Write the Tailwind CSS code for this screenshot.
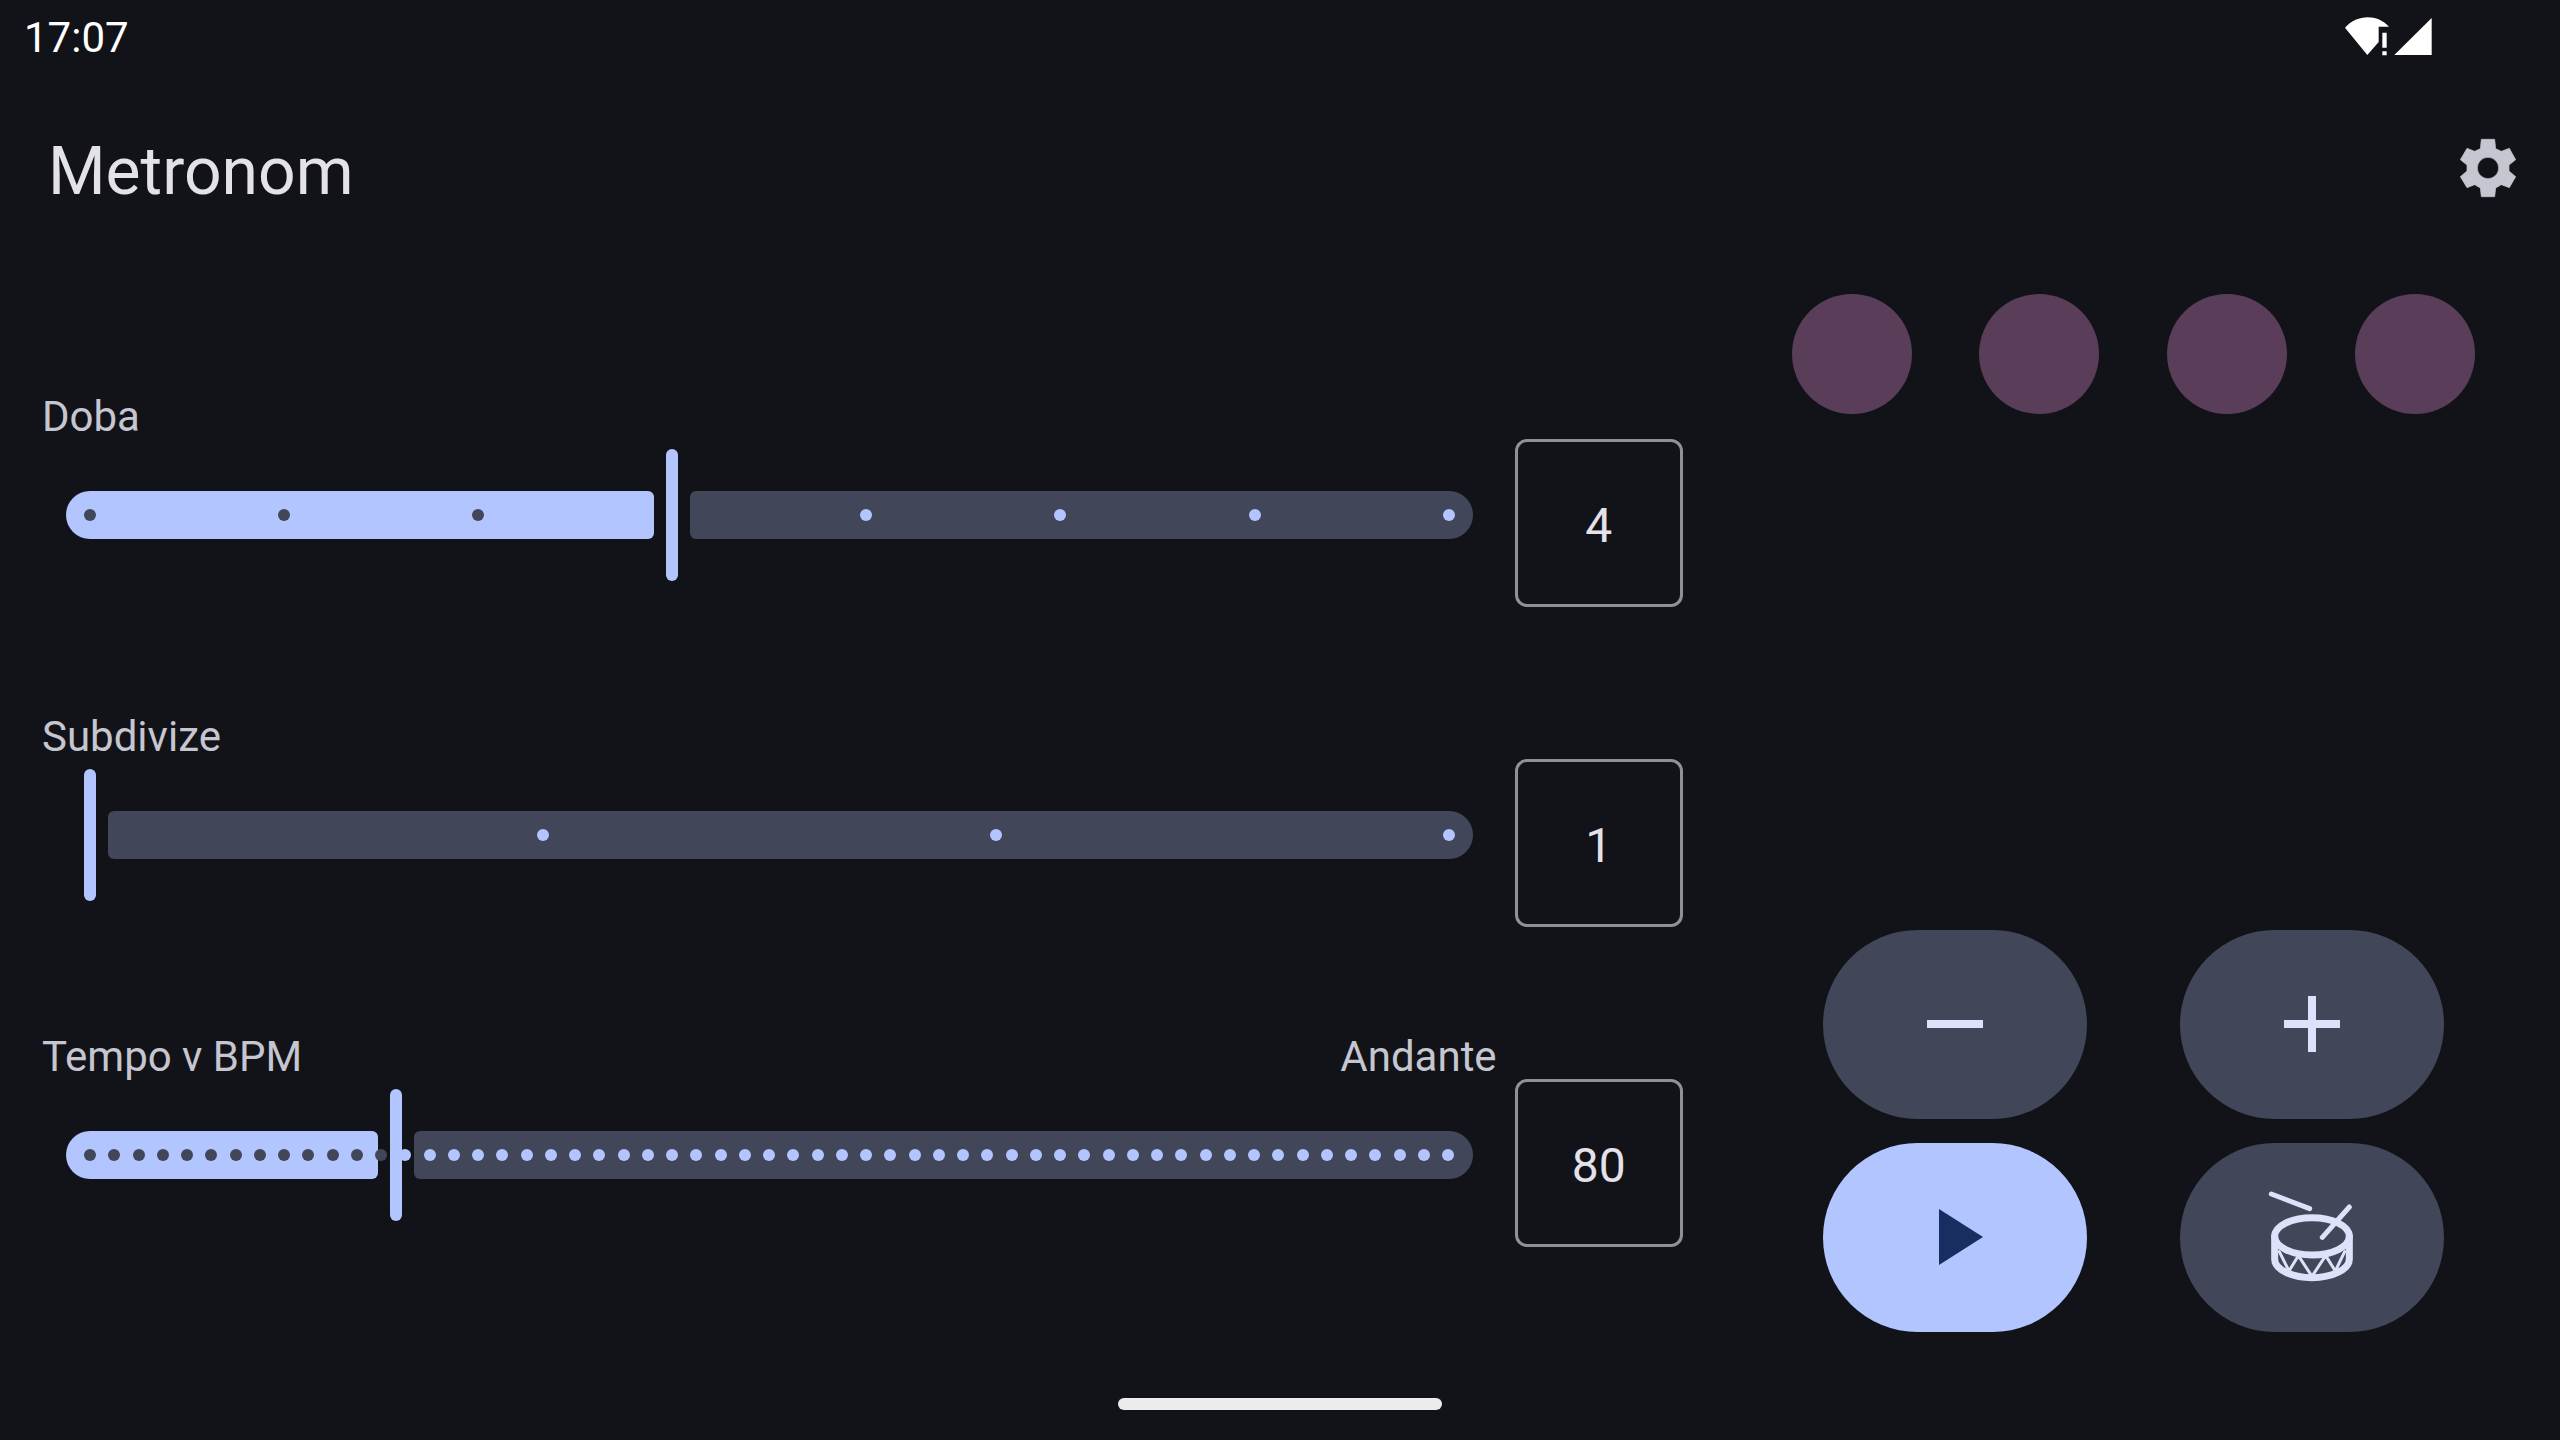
<!DOCTYPE html>
<html lang="cs">

<head>
  <meta charset="UTF-8">
  <meta name="viewport" content="width=device-width, initial-scale=1.0">
  <title>Metronom</title>
  <script src="https://cdn.jsdelivr.net/npm/@tailwindcss/browser@4"></script>
</head>

<body class="flex min-h-screen flex-col bg-[#121318] font-[Roboto,sans-serif] text-[#e3e2e9] antialiased">
  <!-- Status bar -->
  <div class="flex h-18 items-center justify-between pr-32 pl-6 text-white">
    <time class="pt-1 text-[42px] leading-12">17:07</time>
    <svg class="h-[39px] w-[88px]" viewBox="132 48 264 117" fill="currentColor" aria-hidden="true">
      <path d="M135 80C172 39 232 39 267 77H236V123L202 162Z" />
      <path d="M247 95h13v45h-13zM247 151h13v12h-13z" />
      <path d="M395 51V162H283Z" />
    </svg>
  </div>

  <!-- App bar -->
  <header class="flex h-48 items-center justify-between pr-9 pl-12">
    <h1 class="pt-2 text-[66px] leading-21">Metronom</h1>
    <button type="button" class="text-[#c5c6d0]" aria-label="Nastavení">
      <svg class="size-18" viewBox="456 396 216 216" fill="currentColor">
        <path fill-rule="evenodd" stroke="currentColor" stroke-width="2" stroke-linejoin="round"
          d="M544 418h40l3 28 17 8 24-9 19 34-20 16v18l20 17-19 33-24-9-17 10-3 26h-40l-3-26-17-10-23 9-20-33 20-17v-18l-20-16 20-34 23 9 17-8ZM564 472a32 32 0 1 0 0 64 32 32 0 0 0 0-64Z" />
      </svg>
    </button>
  </header>

  <main class="flex flex-1">
    <!-- Sliders -->
    <section class="flex w-2/3 flex-col justify-center gap-25 pt-0.5 pr-6 pl-[42px]">
      <div class="flex items-end gap-[18px]">
        <div class="flex-1 pb-[26px]">
          <div class="text-[42px] leading-15 text-[#c5c6d0]">
            <label for="beats">Doba</label>
          </div>
          <div data-slider class="relative mx-6 mt-0.5 h-33">
            <div class="flex h-full items-center gap-9">
              <div data-active class="h-12 shrink-0 rounded-l-[24px] rounded-r-md bg-[#b2c5ff]"></div>
              <div class="h-12 flex-1 rounded-l-md rounded-r-[24px] bg-[#414659]"></div>
            </div>
            <div data-ticks class="absolute inset-x-[18px] inset-y-0 flex items-center justify-between"></div>
            <input id="beats" type="range" min="1" max="8" value="4" data-tick-count="8"
              class="absolute inset-x-[18px] inset-y-0 appearance-none bg-transparent [&::-webkit-slider-thumb]:h-33 [&::-webkit-slider-thumb]:w-3 [&::-webkit-slider-thumb]:appearance-none [&::-webkit-slider-thumb]:rounded-full [&::-webkit-slider-thumb]:bg-[#b2c5ff]">
          </div>
        </div>
        <input type="text" inputmode="numeric" value="4" aria-label="Doba, hodnota" data-value-for="beats"
          class="size-42 rounded-xl border-3 border-[#8f9099] bg-transparent pt-1 text-center text-5xl">
      </div>

      <div class="flex items-end gap-[18px]">
        <div class="flex-1 pb-[26px]">
          <div class="text-[42px] leading-15 text-[#c5c6d0]">
            <label for="subdivisions">Subdivize</label>
          </div>
          <div data-slider class="relative mx-6 mt-0.5 h-33">
            <div class="flex h-full items-center gap-9">
              <div data-active class="h-12 shrink-0 rounded-l-[24px] rounded-r-md bg-[#b2c5ff]"></div>
              <div class="h-12 flex-1 rounded-l-md rounded-r-[24px] bg-[#414659]"></div>
            </div>
            <div data-ticks class="absolute inset-x-[18px] inset-y-0 flex items-center justify-between"></div>
            <input id="subdivisions" type="range" min="1" max="4" value="1" data-tick-count="4"
              class="absolute inset-x-[18px] inset-y-0 appearance-none bg-transparent [&::-webkit-slider-thumb]:h-33 [&::-webkit-slider-thumb]:w-3 [&::-webkit-slider-thumb]:appearance-none [&::-webkit-slider-thumb]:rounded-full [&::-webkit-slider-thumb]:bg-[#b2c5ff]">
          </div>
        </div>
        <input type="text" inputmode="numeric" value="1" aria-label="Subdivize, hodnota" data-value-for="subdivisions"
          class="size-42 rounded-xl border-3 border-[#8f9099] bg-transparent pt-1 text-center text-5xl">
      </div>

      <div class="flex items-end gap-[18px]">
        <div class="flex-1 pb-[26px]">
          <div class="flex justify-between text-[42px] leading-15 text-[#c5c6d0]">
            <label for="tempo">Tempo v BPM</label>
            <span>Andante</span>
          </div>
          <div data-slider class="relative mx-6 mt-0.5 h-33">
            <div class="flex h-full items-center gap-9">
              <div data-active class="h-12 shrink-0 rounded-l-[24px] rounded-r-md bg-[#b2c5ff]"></div>
              <div class="h-12 flex-1 rounded-l-md rounded-r-[24px] bg-[#414659]"></div>
            </div>
            <div data-ticks class="absolute inset-x-[18px] inset-y-0 flex items-center justify-between"></div>
            <input id="tempo" type="range" min="30" max="252" value="80" data-tick-count="57"
              class="absolute inset-x-[18px] inset-y-0 appearance-none bg-transparent [&::-webkit-slider-thumb]:h-33 [&::-webkit-slider-thumb]:w-3 [&::-webkit-slider-thumb]:appearance-none [&::-webkit-slider-thumb]:rounded-full [&::-webkit-slider-thumb]:bg-[#b2c5ff]">
          </div>
        </div>
        <input type="text" inputmode="numeric" value="80" aria-label="Tempo, hodnota" data-value-for="tempo"
          class="size-42 rounded-xl border-3 border-[#8f9099] bg-transparent pt-1 text-center text-5xl">
      </div>
    </section>

    <!-- Beats and controls -->
    <section class="flex w-1/3 flex-col justify-between pt-[30px] pb-9">
      <div class="grid grid-cols-4 justify-items-center px-[51px]">
        <div class="size-30 rounded-full bg-[#5a3d58]"></div>
        <div class="size-30 rounded-full bg-[#5a3d58]"></div>
        <div class="size-30 rounded-full bg-[#5a3d58]"></div>
        <div class="size-30 rounded-full bg-[#5a3d58]"></div>
      </div>

      <div class="space-y-6 px-6">
        <div class="flex justify-evenly">
          <button type="button" id="slower" aria-label="Zpomalit"
            class="flex h-[189px] w-66 items-center justify-center rounded-full bg-[#414659] pb-px text-[#dde1f9]">
            <svg class="size-24" viewBox="0 0 24 24" fill="currentColor">
              <path d="M19 13H5v-2h14v2z" />
            </svg>
          </button>
          <button type="button" id="faster" aria-label="Zrychlit"
            class="flex h-[189px] w-66 items-center justify-center rounded-full bg-[#414659] pb-px text-[#dde1f9]">
            <svg class="size-24" viewBox="0 0 24 24" fill="currentColor">
              <path d="M19 13h-6v6h-2v-6H5v-2h6V5h2v6h6v2z" />
            </svg>
          </button>
        </div>
        <div class="flex justify-evenly">
          <button type="button" aria-label="Přehrát"
            class="flex h-[189px] w-66 items-center justify-center rounded-full bg-[#b2c5ff] pb-px text-[#182e60]">
            <svg class="size-24" viewBox="0 0 24 24" fill="currentColor">
              <path d="M8 5v14l11-7z" />
            </svg>
          </button>
          <button type="button" aria-label="Vyťukat tempo"
            class="flex h-[189px] w-66 items-center justify-center rounded-full bg-[#414659] pb-px text-[#dde1f9]">
            <svg class="size-24" viewBox="72 58 288 288" fill="none" stroke="currentColor" stroke-linecap="round"
              stroke-linejoin="round">
              <ellipse cx="216" cy="200" rx="112" ry="56" stroke-width="21" />
              <path d="M104 200v68c0 31 50 56 112 56s112-25 112-56v-68" stroke-width="21" />
              <path d="M118 246l29 58 28-46 41 62 41-62 29 46 28-58" stroke-width="9" />
              <path d="M94 73l115 44M328 112l-81 91" stroke-width="15" />
            </svg>
          </button>
        </div>
      </div>
    </section>
  </main>

  <!-- Gesture bar -->
  <div class="flex h-18 items-center justify-center">
    <div class="h-3 w-81 rounded-full bg-[#ececec]"></div>
  </div>

  <script>
    function draw(slider) {
      const input = slider.querySelector('input');
      const active = slider.querySelector('[data-active]');
      const ticks = slider.querySelector('[data-ticks]');
      const count = Number(input.dataset.tickCount);
      const fraction = (input.value - input.min) / (input.max - input.min);

      active.style.width = `calc(6px + (100% - 48px) * ${fraction})`;
      active.style.visibility = fraction > 0 ? 'visible' : 'hidden';

      ticks.innerHTML = '';
      for (let i = 0; i < count; i++) {
        const tick = document.createElement('span');
        const passed = i / (count - 1) < fraction;
        tick.className = passed ? 'size-3 rounded-full bg-[#414659]' : 'size-3 rounded-full bg-[#b2c5ff]';
        ticks.appendChild(tick);
      }
    }

    document.querySelectorAll('[data-slider]').forEach((slider) => {
      const input = slider.querySelector('input');
      const box = document.querySelector(`[data-value-for="${input.id}"]`);
      input.addEventListener('input', () => {
        box.value = input.value;
        draw(slider);
      });
      box.addEventListener('change', () => {
        input.value = box.value;
        box.value = input.value;
        draw(slider);
      });
      draw(slider);
    });

    const tempo = document.getElementById('tempo');
    const changeTempo = (step) => {
      tempo.value = Number(tempo.value) + step;
      tempo.dispatchEvent(new Event('input'));
    };
    document.getElementById('slower').addEventListener('click', () => changeTempo(-1));
    document.getElementById('faster').addEventListener('click', () => changeTempo(1));
  </script>
</body>

</html>
